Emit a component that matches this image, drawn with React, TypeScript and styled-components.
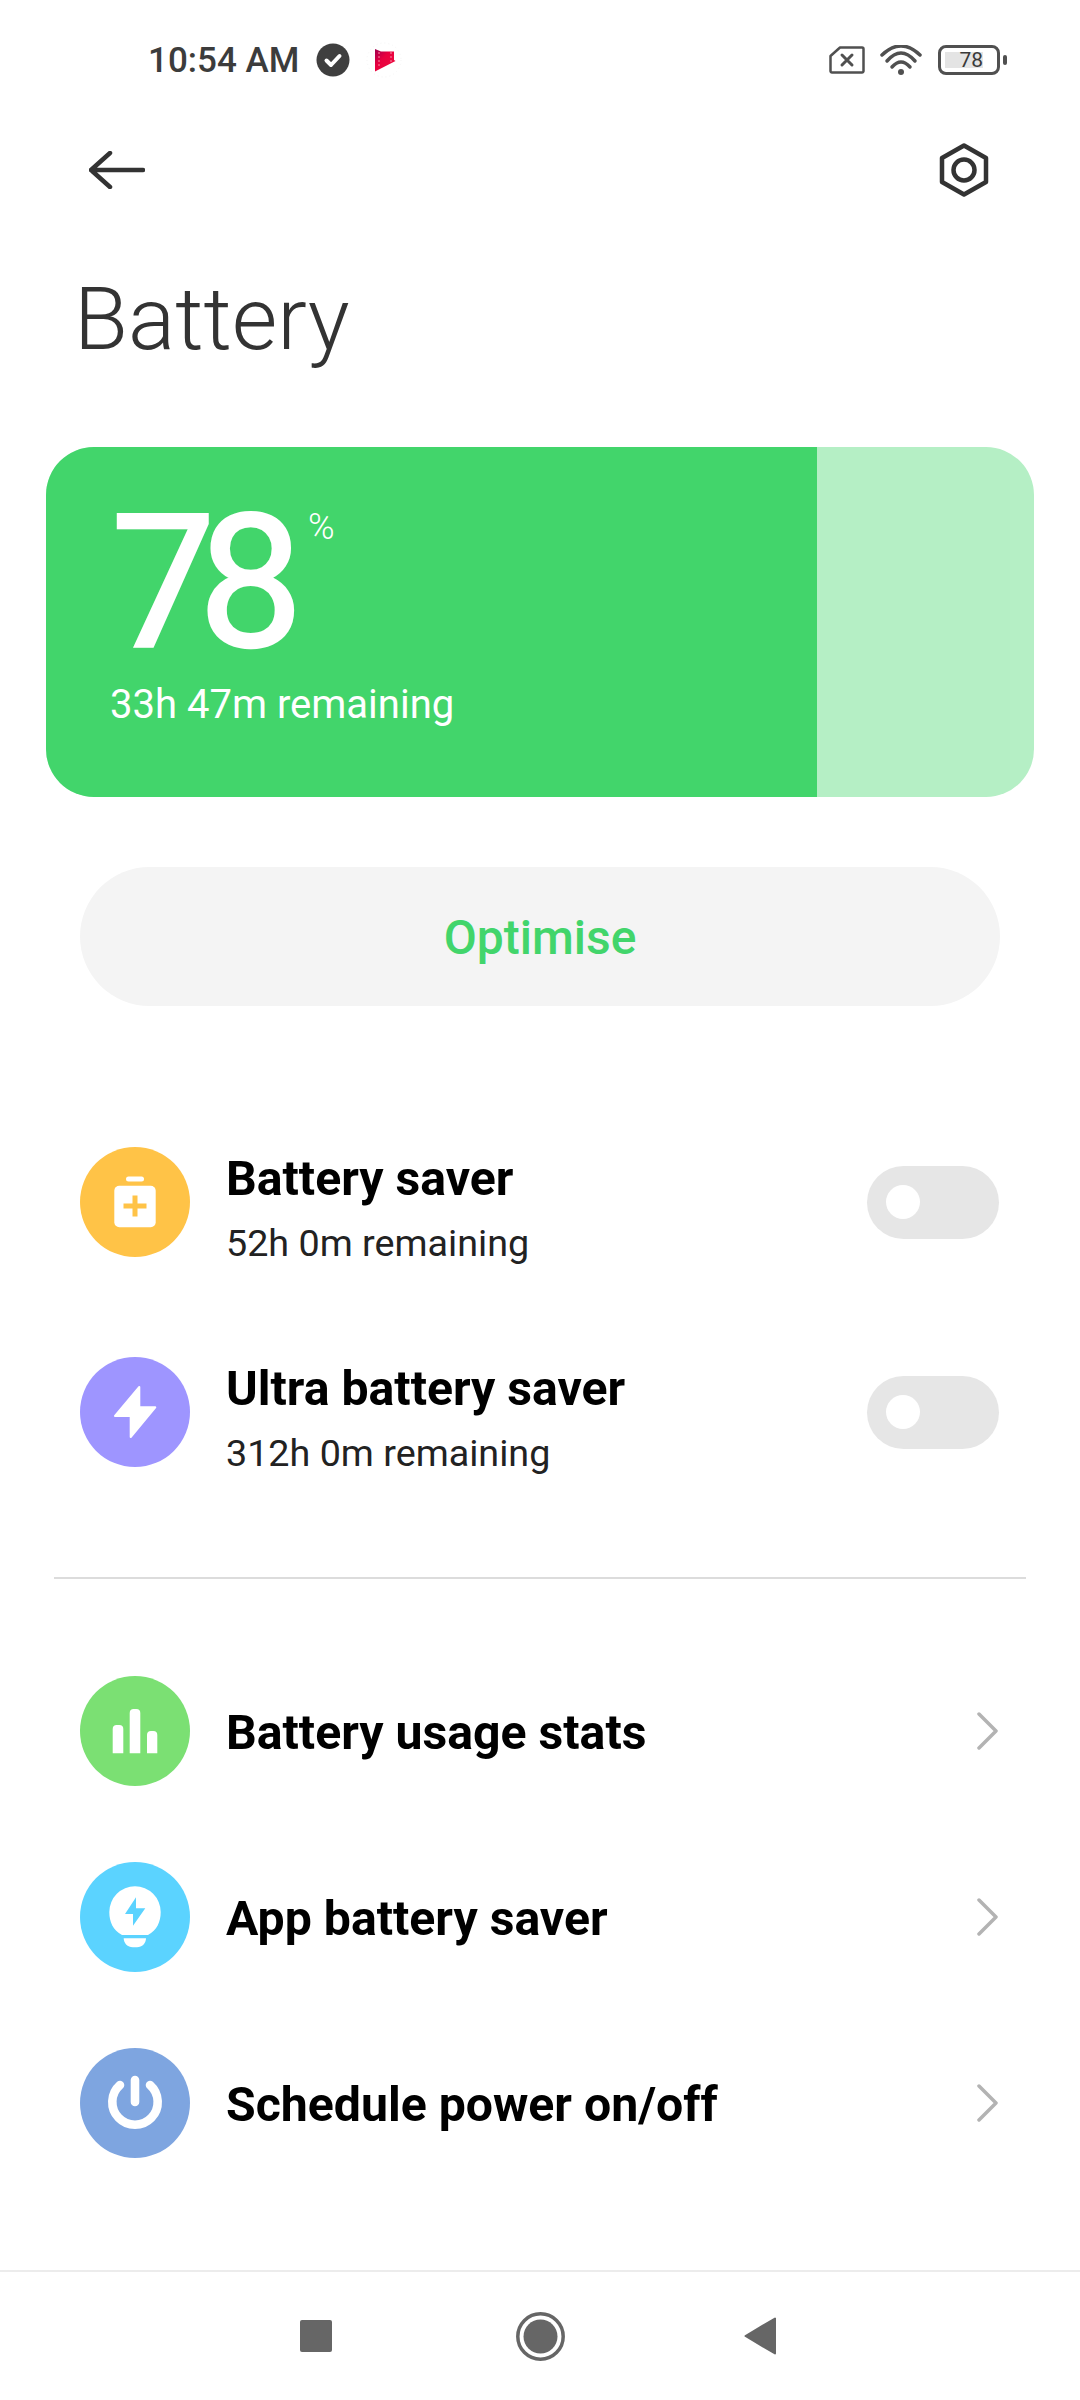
import React from 'react';
import styled, { createGlobalStyle } from 'styled-components';

const GREEN = '#42d56b';

const GlobalStyle = createGlobalStyle`
  html, body {
    margin: 0;
    padding: 0;
    background: #fff;
  }
  * {
    box-sizing: border-box;
  }
`;

const Screen = styled.div`
  width: 1080px;
  height: 2400px;
  display: flex;
  flex-direction: column;
  background: #fff;
  font-family: Roboto, 'Liberation Sans', sans-serif;
  overflow: hidden;
`;

const StatusBar = styled.div`
  height: 120px;
  flex: none;
  display: flex;
  align-items: center;
  padding: 0 80px 0 148px;
`;
const Clock = styled.div`
  font-size: 35px;
  font-weight: 500;
  color: #3c3c3c;
  width: 168px;
`;
const StatusIcons = styled.div`
  display: flex;
  align-items: center;
  gap: 15px;
  margin-left: auto;
`;
const BatteryBody = styled.div`
  position: relative;
  width: 62px;
  height: 30px;
  margin-left: 1px;
  padding: 4px;
  border: 3px solid #505050;
  border-radius: 8px;

  &::after {
    content: '';
    position: absolute;
    top: 7px;
    right: -10px;
    width: 4px;
    height: 10px;
    border-radius: 2px;
    background: #505050;
  }
`;
const BatteryLevel = styled.div`
  width: 38px;
  height: 16px;
  background: #e4e4e4;
  font-size: 21px;
  line-height: 17px;
  text-align: right;
  color: #3a3a3a;
`;

const Header = styled.div`
  height: 100px;
  flex: none;
  display: flex;
  align-items: center;
  justify-content: space-between;
  padding: 0 91px 0 89px;
`;
const Title = styled.h1`
  margin: 39px 0 0;
  padding-left: 74px;
  font-size: 88px;
  font-weight: 300;
  line-height: 120px;
  color: #333;
`;

const Card = styled.div`
  flex: none;
  height: 350px;
  margin: 68px 46px 0;
  border-radius: 48px;
  background: #b5efc5;
  overflow: hidden;
`;
const CardFill = styled.div<{ $level: number }>`
  width: ${(p) => p.$level}%;
  height: 100%;
  padding: 42px 0 0 65px;
  background: ${GREEN};
  color: #fff;
`;
const Percent = styled.div`
  display: flex;
  align-items: flex-start;
`;
const PercentValue = styled.div`
  font-size: 186px;
  font-weight: 400;
  line-height: 186px;
  letter-spacing: -17px;
  -webkit-text-stroke: 2.5px #fff;
`;
const PercentSign = styled.div`
  font-size: 36px;
  font-weight: 300;
  line-height: 40px;
  margin: 18px 0 0 22px;
`;
const Remaining = styled.div`
  margin-top: 5px;
  margin-left: -1px;
  font-size: 40px;
  line-height: 50px;
`;

const OptimiseButton = styled.div`
  flex: none;
  height: 139px;
  margin: 70px 80px 0;
  padding-top: 2px;
  display: flex;
  align-items: center;
  justify-content: center;
  border-radius: 70px;
  background: #f4f4f4;
  color: ${GREEN};
  font-size: 48px;
  font-weight: 500;
`;

const SaverList = styled.div`
  margin-top: 91px;
`;
const Row = styled.div<{ $height: number }>`
  height: ${(p) => p.$height}px;
  display: flex;
  align-items: center;
  gap: 36px;
  padding: 0 81px 0 80px;
`;
const IconCircle = styled.div<{ $color: string }>`
  width: 110px;
  height: 110px;
  flex: none;
  border-radius: 50%;
  background: ${(p) => p.$color};
`;
const RowText = styled.div`
  flex: 1;
  padding-top: 3px;
`;
const SaverText = styled(RowText)`
  padding-top: 11px;
`;
const RowTitle = styled.div`
  font-size: 48.2px;
  font-weight: 700;
  line-height: 58px;
  color: #000;
`;
const RowSub = styled.div`
  font-size: 37.7px;
  line-height: 46px;
  margin-top: 12px;
  color: #222;
`;
const Toggle = styled.div`
  width: 132px;
  height: 73px;
  flex: none;
  display: flex;
  align-items: center;
  padding-left: 19px;
  border-radius: 37px;
  background: #e6e6e6;
`;
const ToggleKnob = styled.div`
  width: 34px;
  height: 34px;
  border-radius: 50%;
  background: #fff;
`;

const Divider = styled.div`
  height: 2px;
  flex: none;
  margin: 60px 54px 59px;
  background: #dcdcdc;
`;

const NavList = styled.div``;

const NavBar = styled.div`
  height: 130px;
  flex: none;
  margin-top: auto;
  display: flex;
  align-items: center;
  justify-content: center;
  border-top: 2px solid #ececec;
`;
const NavSlot = styled.div`
  width: 224px;
  display: flex;
  justify-content: center;
`;
const NavSquare = styled.div`
  width: 32px;
  height: 32px;
  border-radius: 2px;
  background: #666;
`;

const BackArrow = () => (
  <svg width="56" height="38" viewBox="0 0 56 38" fill="none" stroke="#333" strokeWidth="4.5" strokeLinecap="round" strokeLinejoin="round">
    <path d="M21 2 2 19l19 17M2 19h52" />
  </svg>
);
const NutIcon = () => (
  <svg width="50" height="54" viewBox="0 0 50 54" fill="none" stroke="#333" strokeWidth="4.5" strokeLinejoin="round">
    <path d="M25 2.5 47 15v24L25 51.5 3 39V15z" />
    <circle cx="25" cy="27" r="10.5" />
  </svg>
);
const CheckBadge = () => (
  <svg width="34" height="34" viewBox="0 0 34 34">
    <circle cx="17" cy="17" r="16.5" fill="#3f3f3f" />
    <path d="M10.5 17.5l4.5 4.5 8.5-9" fill="none" stroke="#fff" strokeWidth="4" strokeLinecap="round" strokeLinejoin="round" />
  </svg>
);
const MoviesIcon = () => (
  <svg width="36" height="36" viewBox="0 0 36 36" style={{ marginLeft: 16 }}>
    <defs>
      <linearGradient id="movies" x1="0" y1="0" x2="1" y2="1">
        <stop offset="0" stopColor="#a00050" />
        <stop offset="0.4" stopColor="#e8003f" />
        <stop offset="1" stopColor="#ee0f3f" />
      </linearGradient>
    </defs>
    <circle cx="18" cy="18" r="17" fill="none" stroke="#f6f6f6" strokeDasharray="1 3" />
    <path d="M9 7l6 2.5h13v8.500l1.500 1L9 29.500z" fill="url(#movies)" />
    <path d="M13 10v16M25 10v10" stroke="#f58aa5" strokeWidth="1" strokeDasharray="2 2" />
  </svg>
);
const SimIcon = () => (
  <svg width="36" height="28" viewBox="0 0 36 28" fill="none" stroke="#505050" strokeWidth="2.500" strokeLinejoin="round">
    <path d="M11 1.500h22a1.500 1.500 0 0 1 1.500 1.500v22a1.500 1.500 0 0 1-1.500 1.500H3a1.500 1.500 0 0 1-1.500-1.500V10z" />
    <path d="M13 9l10 10M23 9 13 19" strokeLinecap="round" strokeWidth="3" />
  </svg>
);
const WifiIcon = () => (
  <svg width="42" height="30" viewBox="0 0 42 30" fill="none" stroke="#505050" strokeWidth="3.500" strokeLinecap="round">
    <path d="M2 10Q21-8 40 10" />
    <path d="M7 16Q21 0 35 16" />
    <path d="M12 22q9-10 18 0" />
    <circle cx="21" cy="27" r="3" fill="#505050" stroke="none" />
  </svg>
);
const ChevronIcon = () => (
  <svg width="22" height="38" viewBox="0 0 22 38" fill="none" stroke="#b3b3b3" strokeWidth="3.500" strokeLinecap="round" strokeLinejoin="round">
    <path d="M2 2l17 17L2 36" />
  </svg>
);

const Glyph: React.FC<{ children: React.ReactNode }> = ({ children }) => (
  <svg width="110" height="110" viewBox="0 0 110 110" fill="#fff">
    {children}
  </svg>
);

const SaverGlyph = () => (
  <Glyph>
    <rect x="46" y="29.500" width="18" height="5" rx="2.500" />
    <rect x="34.300" y="38.700" width="41.400" height="41.600" rx="5" />
    <path d="M43.500 59h23M55 48.500v21" stroke="#ffc347" strokeWidth="5" />
  </Glyph>
);
const BoltGlyph = () => (
  <Glyph>
    <path d="M59.300 30 35 59h15.700v21l24.600-29.700h-16z" stroke="#fff" strokeWidth="2" strokeLinejoin="round" />
  </Glyph>
);
const BarsGlyph = () => (
  <Glyph>
    <path d="M32.700 77.300V53a4 4 0 0 1 4-4h2.600a4 4 0 0 1 4 4v24.300zM49.700 77.300V37a4 4 0 0 1 4-4h2.600a4 4 0 0 1 4 4v40.300zM67 77.300V59a4 4 0 0 1 4-4h2.300a4 4 0 0 1 4 4v18.300z" />
  </Glyph>
);
const BulbGlyph = () => (
  <Glyph>
    <path d="M42 73C33 68 29.300 60 29.300 50a25.700 25.700 0 0 1 51.400 0c0 10-3.700 18-12.700 23z" />
    <path d="M43.700 76.300h22.300c0 5-4 9-9 9h-4.300c-5 0-9-4-9-9z" />
    <path d="M56 35.300 45 52h8v11.700l12.300-17.400H56z" fill="#5bd3ff" />
  </Glyph>
);
const PowerGlyph = () => (
  <Glyph>
    <path d="M55 32v22M40 37a22.700 22.700 0 1 0 30 0" fill="none" stroke="#fff" strokeWidth="8.600" strokeLinecap="round" />
  </Glyph>
);

const HomeIcon = () => (
  <svg width="49" height="49" viewBox="0 0 49 49">
    <circle cx="24.500" cy="24.500" r="22.700" fill="none" stroke="#666" strokeWidth="3.500" />
    <circle cx="24.500" cy="24.500" r="17" fill="#666" />
  </svg>
);
const BackTriangle = () => (
  <svg width="40" height="38" viewBox="0 0 40 38">
    <path d="M31 1.500v35L1.500 19z" fill="#666" stroke="#666" strokeWidth="2" strokeLinejoin="round" />
  </svg>
);

const savers = [
  { title: 'Battery saver', sub: '52h 0m remaining', color: '#ffc347', glyph: <SaverGlyph /> },
  { title: 'Ultra battery saver', sub: '312h 0m remaining', color: '#9e95ff', glyph: <BoltGlyph /> },
];

const links = [
  { title: 'Battery usage stats', color: '#7be073', glyph: <BarsGlyph /> },
  { title: 'App battery saver', color: '#5bd3ff', glyph: <BulbGlyph /> },
  { title: 'Schedule power on/off', color: '#7ea5e0', glyph: <PowerGlyph /> },
];

const App: React.FC = () => {
  return (
    <Screen>
      <GlobalStyle />
      <StatusBar>
        <Clock>10:54 AM</Clock>
        <CheckBadge />
        <MoviesIcon />
        <StatusIcons>
          <SimIcon />
          <WifiIcon />
          <BatteryBody>
            <BatteryLevel>78</BatteryLevel>
          </BatteryBody>
        </StatusIcons>
      </StatusBar>
      <Header>
        <BackArrow />
        <NutIcon />
      </Header>
      <Title>Battery</Title>
      <Card>
        <CardFill $level={78}>
          <Percent>
            <PercentValue>78</PercentValue>
            <PercentSign>%</PercentSign>
          </Percent>
          <Remaining>33h 47m remaining</Remaining>
        </CardFill>
      </Card>
      <OptimiseButton>Optimise</OptimiseButton>
      <SaverList>
        {savers.map((item) => (
          <Row key={item.title} $height={210}>
            <IconCircle $color={item.color}>{item.glyph}</IconCircle>
            <SaverText>
              <RowTitle>{item.title}</RowTitle>
              <RowSub>{item.sub}</RowSub>
            </SaverText>
            <Toggle>
              <ToggleKnob />
            </Toggle>
          </Row>
        ))}
      </SaverList>
      <Divider />
      <NavList>
        {links.map((item) => (
          <Row key={item.title} $height={186}>
            <IconCircle $color={item.color}>{item.glyph}</IconCircle>
            <RowText>
              <RowTitle>{item.title}</RowTitle>
            </RowText>
            <ChevronIcon />
          </Row>
        ))}
      </NavList>
      <NavBar>
        <NavSlot>
          <NavSquare />
        </NavSlot>
        <NavSlot>
          <HomeIcon />
        </NavSlot>
        <NavSlot>
          <BackTriangle />
        </NavSlot>
      </NavBar>
    </Screen>
  );
};

export default App;
